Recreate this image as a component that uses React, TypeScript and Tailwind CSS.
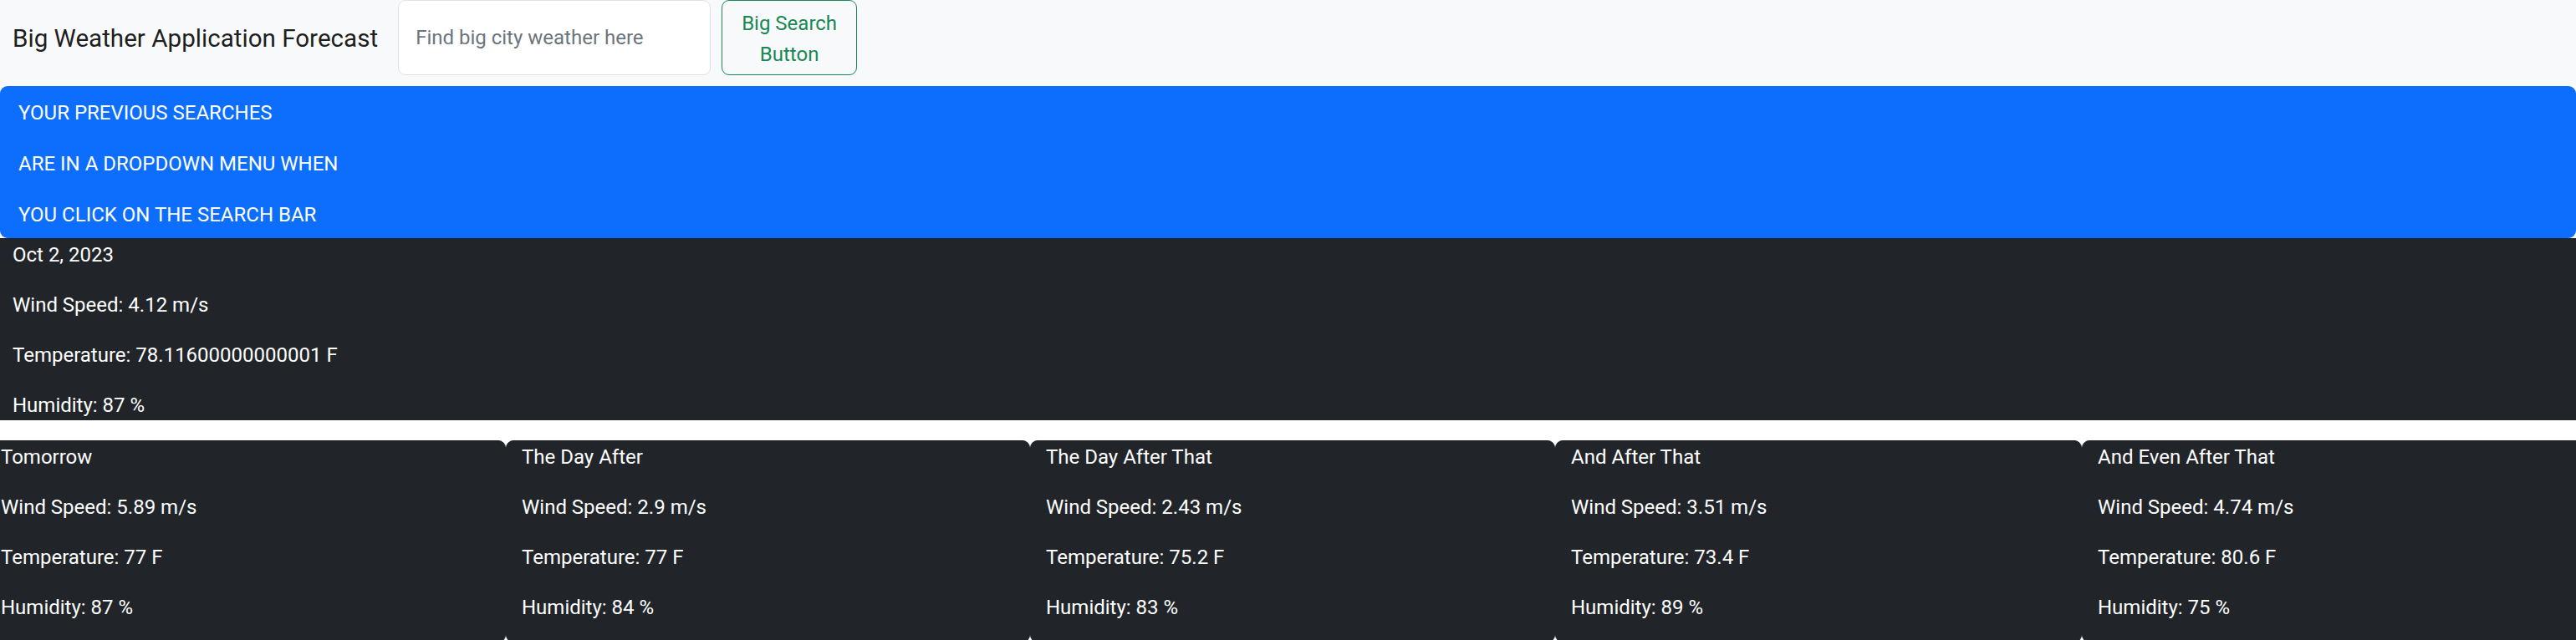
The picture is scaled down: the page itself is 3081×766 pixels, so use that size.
import React from "react";

const current = [
  "Oct 2, 2023",
  "Wind Speed: 4.12 m/s",
  "Temperature: 78.11600000000001 F",
  "Humidity: 87 %",
];

const forecast = [
  { title: "Tomorrow", wind: "5.89", temp: "77", hum: "87" },
  { title: "The Day After", wind: "2.9", temp: "77", hum: "84" },
  { title: "The Day After That", wind: "2.43", temp: "75.2", hum: "83" },
  { title: "And After That", wind: "3.51", temp: "73.4", hum: "89" },
  { title: "And Even After That", wind: "4.74", temp: "80.6", hum: "75" },
];

export default function App() {
  return (
    <div className="w-full min-h-[766px] bg-white overflow-hidden font-['Roboto','Segoe_UI',sans-serif] text-[24px] leading-[36px]">
      {/* Navbar */}
      <nav className="h-[103px] bg-[#f8f9fa] flex items-start pl-[15px]">
        <span className="mt-[24px] text-[29.6px] leading-[45px] text-black/90 whitespace-nowrap">
          Big Weather Application Forecast
        </span>
        <input
          className="ml-[24px] w-[374px] h-[90px] bg-white border border-[#dee2e6] rounded-[9px] pl-[20px] text-[24px] text-[#212529] placeholder:text-[#6c757d] outline-none"
          placeholder="Find big city weather here"
        />
        <button className="ml-[13px] w-[162px] h-[90px] border-[1.5px] border-[#198754] rounded-[9px] text-[#198754] text-[24px] leading-[37px] text-center px-[18px] pt-[4px] bg-transparent">
          Big Search Button
        </button>
      </nav>

      {/* Previous searches */}
      <div className="bg-[#0d6efd] rounded-[9px] pt-[14px] pb-[10px] pl-[22px] text-white flex flex-col gap-[25px]">
        <div>YOUR PREVIOUS SEARCHES</div>
        <div>ARE IN A DROPDOWN MENU WHEN</div>
        <div>YOU CLICK ON THE SEARCH BAR</div>
      </div>

      {/* Current weather */}
      <div className="bg-[#212529] pt-[2px] px-[15px] text-white flex flex-col gap-[24px]">
        {current.map((t) => (
          <div key={t}>{t}</div>
        ))}
      </div>

      {/* Forecast cards */}
      <div className="mt-[24px] -ml-[18px] w-[calc(100%+36px)] grid grid-cols-[623px_627px_628px_630px_1fr]">
        {forecast.map((d) => (
          <div
            key={d.title}
            className="bg-[#212529] rounded-[9px] border-[1.5px] border-[#212529] h-[242px] pt-[1px] pl-[18px] text-white flex flex-col gap-[24px]"
          >
            <div>{d.title}</div>
            <div>Wind Speed: {d.wind} m/s</div>
            <div>Temperature: {d.temp} F</div>
            <div>Humidity: {d.hum} %</div>
          </div>
        ))}
      </div>
    </div>
  );
}
